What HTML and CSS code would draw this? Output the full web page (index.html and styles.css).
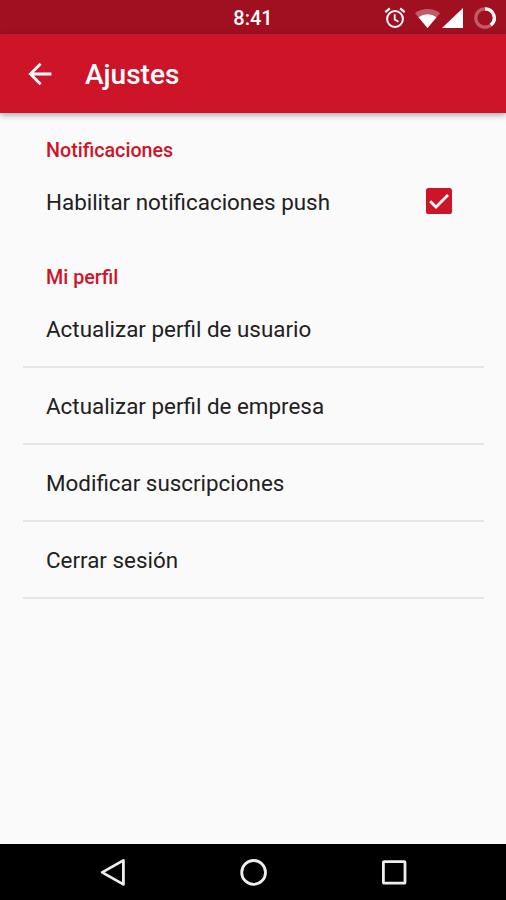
FILE: index.html
```html
<!DOCTYPE html>
<html lang="es">
<head>
    <meta charset="UTF-8">
    <title>Ajustes</title>
    <meta name="viewport" content="width=device-width, initial-scale=1.0">
    <link rel="stylesheet" href="styles.css">
</head>
<body>

<div class="status-bar">
    <span class="clock">8:41</span>
    <div class="status-icons">
        <svg class="alarm" width="22" height="22" viewBox="0 0 22 22" fill="none" stroke="#fff">
            <circle cx="11" cy="12" r="7.9" stroke-width="2"/>
            <path d="M10.7 7.3v5.2l3.7 2.3" stroke-width="1.8"/>
            <path d="M1.3 5.2l4.5-3.8M20.7 5.2l-4.5-3.8" stroke-width="2.2"/>
        </svg>
        <svg class="wifi" width="25" height="19" viewBox="0 0 25 19" fill="#fff">
            <path d="M12.5 19L0 4.2Q5.5 0 12.5 0T25 4.2z" opacity="0.32"/>
            <path d="M12.5 19L3.5 8.2Q7.5 5.2 12.5 5.2T21.5 8.2z"/>
        </svg>
        <svg class="signal" width="21" height="20" viewBox="0 0 21 20" fill="#fff">
            <path d="M0 20L21 0v20z"/>
        </svg>
        <svg class="battery" width="24" height="24" viewBox="0 0 24 24" fill="none" stroke="#fff" stroke-width="3.2">
            <circle cx="12" cy="12" r="9.2" opacity="0.32"/>
            <path d="M12 2.8a9.2 9.2 0 0 1 5.9 16.3"/>
        </svg>
    </div>
</div>

<header class="app-bar">
    <svg class="back" width="24" height="24" viewBox="0 0 24 24" fill="none" stroke="#fff" stroke-width="2.8">
        <path d="M23.4 12H2.4M12.6 1.8L2.4 12l10.2 10.2"/>
    </svg>
    <h1>Ajustes</h1>
</header>

<main class="settings">
    <h2>Notificaciones</h2>
    <div class="row">
        <span>Habilitar notificaciones push</span>
        <svg class="checkbox" width="26" height="26" viewBox="0 0 26 26">
            <rect width="26" height="26" rx="2.6" fill="#ce1429"/>
            <path d="M4.2 13.2l5.8 5.8L22 7" fill="none" stroke="#fff" stroke-width="2.8"/>
        </svg>
    </div>

    <h2 class="profile-title">Mi perfil</h2>
    <div class="row line">Actualizar perfil de usuario</div>
    <div class="row line">Actualizar perfil de empresa</div>
    <div class="row line">Modificar suscripciones</div>
    <div class="row line">Cerrar sesión</div>
</main>

<nav class="nav-bar">
    <svg width="28" height="28" viewBox="0 0 28 28"><path d="M24.4 2.4v24L3.2 14.4z"/></svg>
    <svg width="28" height="28" viewBox="0 0 28 28"><circle cx="13.6" cy="14.4" r="11.9"/></svg>
    <svg width="28" height="28" viewBox="0 0 28 28"><rect x="3.4" y="3.6" width="21.6" height="21.6" rx="0.8"/></svg>
</nav>

</body>
</html>
```
FILE: styles.css
```css
* {
    box-sizing: border-box;
}
body {
    margin: 0;
    height: 900px;
    display: flex;
    flex-direction: column;
    font-family: Roboto, sans-serif;
    background: #fafafa;
    color: #212121;
    overflow: hidden;
}
.status-bar {
    height: 34px;
    display: grid;
    grid-template-columns: 1fr auto 1fr;
    align-items: center;
    background: #a11020;
    color: #fff;
}
.clock {
    grid-column: 2;
    font-size: 20px;
    font-weight: 500;
    line-height: 34px;
    padding-top: 1px;
}
.status-icons {
    display: flex;
    align-items: center;
    justify-content: flex-end;
    padding-right: 9px;
}
.wifi {
    margin: 2px 2px 0 9px;
}
.battery {
    margin-left: 10px;
}
.app-bar {
    height: 79px;
    display: flex;
    align-items: center;
    padding-left: 28px;
    background: #ce1429;
    color: #fff;
    box-shadow: 0 2px 6px rgba(0, 0, 0, 0.35);
}
.app-bar h1 {
    margin: 2px 0 0 33px;
    font-size: 28px;
    font-weight: 500;
}
.settings {
    flex: 1;
    padding: 26px 22px 0 23px;
}
.settings h2 {
    margin: 0;
    padding-left: 23px;
    font-size: 19.7px;
    font-weight: 500;
    line-height: 24px;
    color: #ce1429;
}
.row {
    height: 77px;
    display: flex;
    align-items: center;
    justify-content: space-between;
    padding: 1px 32px 0 23px;
    font-size: 22.4px;
}
.checkbox {
    margin-bottom: 2px;
}
.settings .profile-title {
    margin: 26px 0 1px;
}
.line {
    padding-top: 0;
    border-bottom: 2px solid #e5e5e5;
}
.nav-bar {
    height: 56px;
    display: flex;
    align-items: center;
    justify-content: space-between;
    padding: 0 98px 0 99px;
    background: #000;
}
.nav-bar svg {
    fill: none;
    stroke: #eee;
    stroke-width: 2.8;
    stroke-linejoin: round;
}
```
